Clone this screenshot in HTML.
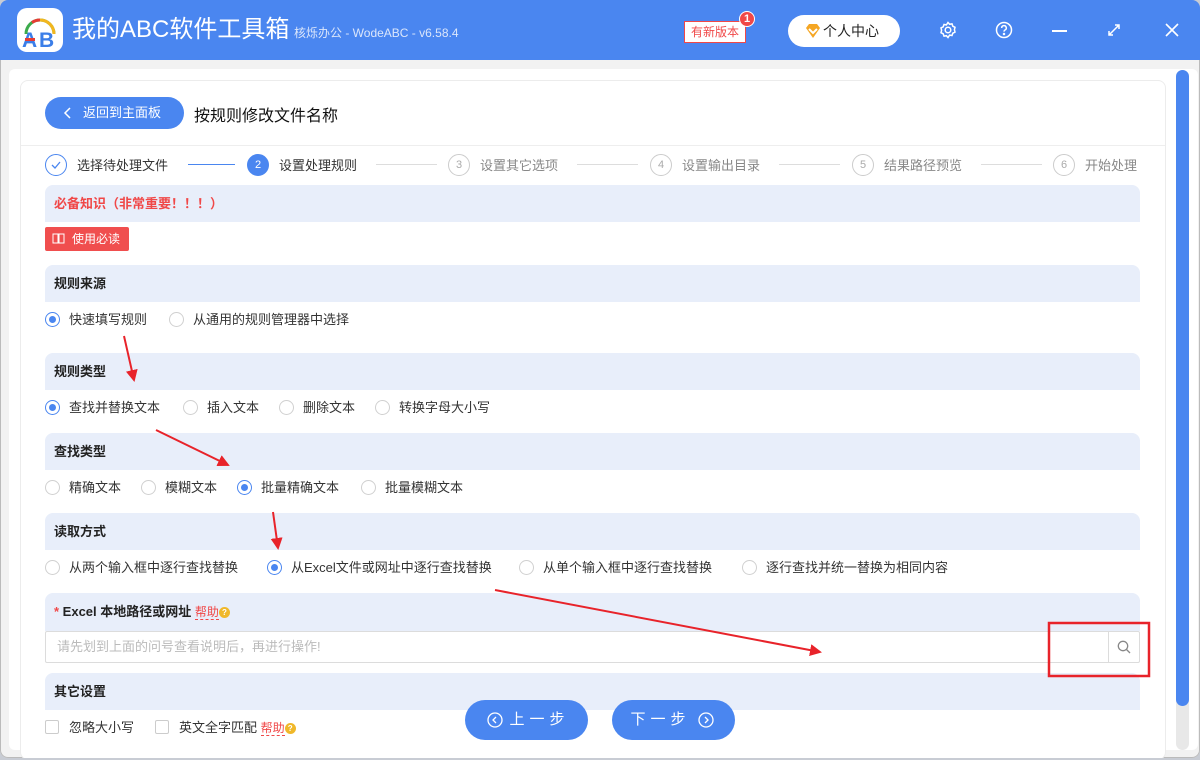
<!DOCTYPE html>
<html><head><meta charset="utf-8"><style>
*{box-sizing:border-box;margin:0;padding:0}
body{width:1200px;height:760px;overflow:hidden;background:#c8ccd4;font-family:"Liberation Sans","Noto Sans CJK SC",sans-serif;position:relative;font-size:13px;color:#333}
.a{position:absolute}
.win{left:0;top:0;width:1200px;height:758px;background:#f2f2f2;border-radius:8px;overflow:hidden;box-shadow:inset 0 0 0 1px #bbb}
.hdr{left:0;top:0;width:1200px;height:60px;background:#4a86f0}
.panel{left:9px;top:69px;width:1189px;height:681px;background:#fff;border-radius:6px}
.card{left:20px;top:80px;width:1146px;height:680px;border:1px solid #ececec;border-radius:8px;background:#fff}
.band{left:45px;width:1095px;height:37px;background:#e8eefa;border-radius:8px 8px 0 0;font-weight:bold;font-size:13px;line-height:37px;padding-left:9px;color:#222}
.r{position:absolute;width:15px;height:15px;border:1px solid #d0d0d0;border-radius:50%;background:#fff}
.r.on{border-color:#4a86f0}
.r.on::after{content:"";position:absolute;left:3px;top:3px;width:7px;height:7px;border-radius:50%;background:#4a86f0}
.t{position:absolute;font-size:13px;color:#333;white-space:nowrap}
.st{position:absolute;width:22px;height:22px;border:1px solid #ccc;border-radius:50%;color:#aaa;font-size:11px;text-align:center;line-height:20px}
.sl{position:absolute;height:1px;background:#ddd;top:164px}
.btn{position:absolute;height:40px;width:123px;border-radius:20px;background:#4a86f0;color:#fff;font-size:15px;line-height:40px;text-align:center;letter-spacing:5px}
.cb{position:absolute;width:14px;height:14px;border:1px solid #ccc;border-radius:2px;background:#fff}
.help{color:#f04848;border-bottom:1px dashed #f04848;font-size:12px}
.q{display:inline-block;width:11px;height:11px;border-radius:50%;background:#f0b82a;color:#fff;font-size:8px;text-align:center;line-height:11px;vertical-align:middle;font-weight:bold}
</style></head><body>
<div class="a win">
<div class="a hdr"></div>
<div class="a" style="left:17px;top:8px;width:46px;height:44px;background:#fff;border-radius:10px"></div>
<svg class="a" style="left:17px;top:8px" width="46" height="44" viewBox="0 0 46 44">
<path d="M9 26 A14 14 0 0 1 37 26" fill="none" stroke="#3cab4c" stroke-width="3"/>
<path d="M23 12 A14 14 0 0 1 37 26" fill="none" stroke="#f3b61e" stroke-width="3"/>
<path d="M15 14.5 A14 14 0 0 1 23 12" fill="none" stroke="#e63b33" stroke-width="3"/>
<text x="5" y="39" font-family="Liberation Sans" font-weight="bold" font-size="21" fill="#3b7ee8">A</text>
<text x="22" y="39" font-family="Liberation Sans" font-weight="bold" font-size="21" fill="#3b7ee8">B</text>
<rect x="8" y="30" width="10" height="3" fill="#e63b33"/>
</svg>
<div class="a" style="left:72px;top:14px;color:#fff;font-size:24px;line-height:32px">我的ABC软件工具箱</div>
<div class="a" style="left:294px;top:24px;color:#dbe6fb;font-size:12px">核烁办公 - WodeABC - v6.58.4</div>
<div class="a" style="left:684px;top:21px;width:62px;height:22px;border:1px solid #f04848;background:#fff;color:#f04848;font-size:12px;text-align:center;line-height:20px">有新版本</div>
<div class="a" style="left:739px;top:11px;width:16px;height:16px;border-radius:50%;background:#f04848;border:1px solid #fff;color:#fff;font-size:11px;text-align:center;line-height:14px;font-weight:bold">1</div>
<div class="a" style="left:788px;top:15px;width:112px;height:32px;border-radius:16px;background:#fff;font-size:14px;line-height:32px;padding-left:35px;color:#222">个人中心</div>
<svg class="a" style="left:804px;top:22px" width="18" height="18" viewBox="0 0 18 18"><path d="M2 6 L5 2 H13 L16 6 L9 16 Z" fill="#f5a623"/><path d="M5 7 L9 11 L13 7" fill="none" stroke="#fff" stroke-width="2"/></svg>
<svg class="a" style="left:938px;top:20px" width="20" height="20" viewBox="0 0 20 20" fill="none" stroke="#fff" stroke-width="1.5"><circle cx="10" cy="10" r="2.8"/><path d="M10 2.5l1.6 1.8 2.4-.4.8 2.3 2.2 1.1-.6 2.4 .6 2.4-2.2 1.1-.8 2.3-2.4-.4L10 17.5l-1.6-1.8-2.4.4-.8-2.3-2.2-1.1.6-2.4-.6-2.4 2.2-1.1.8-2.3 2.4.4z"/></svg>
<svg class="a" style="left:994px;top:20px" width="20" height="20" viewBox="0 0 20 20" fill="none" stroke="#fff" stroke-width="1.5"><circle cx="10" cy="10" r="7.5"/><path d="M7.7 8a2.3 2.3 0 1 1 3.3 2c-.7.4-1 .8-1 1.6"/><circle cx="10" cy="14" r=".5" fill="#fff"/></svg>
<div class="a" style="left:1052px;top:30px;width:15px;height:1.5px;background:#fff"></div>
<svg class="a" style="left:1106px;top:22px" width="16" height="16" viewBox="0 0 16 16" stroke="#fff" stroke-width="1.5" fill="none"><path d="M3 13 L13 3 M9 3 H13 V7 M3 9 V13 H7"/></svg>
<svg class="a" style="left:1164px;top:22px" width="16" height="16" viewBox="0 0 16 16" stroke="#fff" stroke-width="1.6"><path d="M2 2 L14 14 M14 2 L2 14"/></svg>

<div class="a panel"></div>
<div class="a" style="left:1176px;top:70px;width:13px;height:680px;background:#e8e8e8;border-radius:7px"></div>
<div class="a" style="left:1176px;top:70px;width:13px;height:636px;background:#4a86f0;border-radius:7px"></div>
<div class="a card"></div>
<div class="a" style="left:21px;top:145px;width:1144px;height:1px;background:#eee"></div>

<div class="btn" style="left:45px;top:97px;width:139px;height:32px;line-height:32px;font-size:13px;letter-spacing:0;text-align:left;padding-left:38px;border-radius:16px">返回到主面板</div>
<svg class="a" style="left:63px;top:106px" width="10" height="14" viewBox="0 0 10 14"><path d="M7 2 L2 7 L7 12" stroke="#fff" stroke-width="1.5" fill="none"/></svg>
<div class="a" style="left:194px;top:102px;font-size:16px;color:#111">按规则修改文件名称</div>

<div class="st" style="left:45px;top:154px;border-color:#4a86f0"></div>
<svg class="a" style="left:49px;top:158px" width="14" height="14" viewBox="0 0 14 14"><path d="M3 7 L6 10 L11 4" stroke="#4a86f0" stroke-width="1.3" fill="none"/></svg>
<div class="t" style="left:77px;top:155px">选择待处理文件</div>
<div class="sl" style="left:188px;width:47px;background:#4a86f0"></div>
<div class="st" style="left:247px;top:154px;background:#4a86f0;border-color:#4a86f0;color:#fff">2</div>
<div class="t" style="left:279px;top:155px">设置处理规则</div>
<div class="sl" style="left:376px;width:61px"></div>
<div class="st" style="left:448px;top:154px">3</div>
<div class="t" style="left:480px;top:155px;color:#888">设置其它选项</div>
<div class="sl" style="left:577px;width:61px"></div>
<div class="st" style="left:650px;top:154px">4</div>
<div class="t" style="left:682px;top:155px;color:#888">设置输出目录</div>
<div class="sl" style="left:779px;width:61px"></div>
<div class="st" style="left:852px;top:154px">5</div>
<div class="t" style="left:884px;top:155px;color:#888">结果路径预览</div>
<div class="sl" style="left:981px;width:61px"></div>
<div class="st" style="left:1053px;top:154px">6</div>
<div class="t" style="left:1085px;top:155px;color:#888">开始处理</div>

<div class="a band" style="top:185px;color:#f04848">必备知识（非常重要！！！）</div>
<div class="a" style="left:45px;top:227px;width:84px;height:24px;background:#f04e4e;border-radius:2px;color:#fff;font-size:12px;line-height:24px;padding-left:27px">使用必读</div>
<svg class="a" style="left:52px;top:233px" width="13" height="11" viewBox="0 0 13 11" fill="none" stroke="#fff"><path d="M1 1h5v9H1zM7 1h5v9H7z"/></svg>

<div class="a band" style="top:265px">规则来源</div>
<div class="r on" style="left:45px;top:312px"></div><div class="t" style="left:69px;top:309px">快速填写规则</div>
<div class="r" style="left:169px;top:312px"></div><div class="t" style="left:193px;top:309px">从通用的规则管理器中选择</div>

<div class="a band" style="top:353px">规则类型</div>
<div class="r on" style="left:45px;top:400px"></div><div class="t" style="left:69px;top:397px">查找并替换文本</div>
<div class="r" style="left:183px;top:400px"></div><div class="t" style="left:207px;top:397px">插入文本</div>
<div class="r" style="left:279px;top:400px"></div><div class="t" style="left:303px;top:397px">删除文本</div>
<div class="r" style="left:375px;top:400px"></div><div class="t" style="left:399px;top:397px">转换字母大小写</div>

<div class="a band" style="top:433px">查找类型</div>
<div class="r" style="left:45px;top:480px"></div><div class="t" style="left:69px;top:477px">精确文本</div>
<div class="r" style="left:141px;top:480px"></div><div class="t" style="left:165px;top:477px">模糊文本</div>
<div class="r on" style="left:237px;top:480px"></div><div class="t" style="left:261px;top:477px">批量精确文本</div>
<div class="r" style="left:361px;top:480px"></div><div class="t" style="left:385px;top:477px">批量模糊文本</div>

<div class="a band" style="top:513px">读取方式</div>
<div class="r" style="left:45px;top:560px"></div><div class="t" style="left:69px;top:557px">从两个输入框中逐行查找替换</div>
<div class="r on" style="left:267px;top:560px"></div><div class="t" style="left:291px;top:557px">从Excel文件或网址中逐行查找替换</div>
<div class="r" style="left:519px;top:560px"></div><div class="t" style="left:543px;top:557px">从单个输入框中逐行查找替换</div>
<div class="r" style="left:742px;top:560px"></div><div class="t" style="left:766px;top:557px">逐行查找并统一替换为相同内容</div>

<div class="a band" style="top:593px;height:38px;line-height:38px"><span style="color:#f04848">*</span> Excel 本地路径或网址 <span class="help" style="font-weight:normal">帮助</span><span class="q">?</span></div>
<div class="a" style="left:45px;top:631px;width:1095px;height:32px;border:1px solid #dcdcdc;border-radius:2px;background:#fff;color:#bbb;font-size:13px;line-height:30px;padding-left:11px">请先划到上面的问号查看说明后，再进行操作!</div>
<div class="a" style="left:1108px;top:632px;width:1px;height:30px;background:#dcdcdc"></div>
<svg class="a" style="left:1116px;top:639px" width="16" height="16" viewBox="0 0 16 16" fill="none" stroke="#888" stroke-width="1.3"><circle cx="7" cy="7" r="4.7"/><path d="M10.5 10.5 L14 14"/></svg>

<div class="a band" style="top:673px">其它设置</div>
<div class="cb" style="left:45px;top:720px"></div><div class="t" style="left:69px;top:717px">忽略大小写</div>
<div class="cb" style="left:155px;top:720px"></div><div class="t" style="left:179px;top:717px">英文全字匹配 <span class="help">帮助</span><span class="q">?</span></div>

<div class="btn" style="left:465px;top:700px;padding-left:26px">上一步</div>
<svg class="a" style="left:486px;top:711px" width="18" height="18" viewBox="0 0 18 18" fill="none" stroke="#fff" stroke-width="1.3"><circle cx="9" cy="9" r="7"/><path d="M10 6 L7 9 L10 12"/></svg>
<div class="btn" style="left:612px;top:700px;padding-right:26px">下一步</div>
<svg class="a" style="left:697px;top:711px" width="18" height="18" viewBox="0 0 18 18" fill="none" stroke="#fff" stroke-width="1.3"><circle cx="9" cy="9" r="7"/><path d="M8 6 L11 9 L8 12"/></svg>

<svg class="a" style="left:0;top:0" width="1200" height="760" viewBox="0 0 1200 760">
<defs><marker id="m" markerWidth="6" markerHeight="6" refX="5" refY="3" orient="auto"><path d="M0 0 L6 3 L0 6 Z" fill="#e8232a"/></marker></defs>
<g stroke="#e8232a" stroke-width="2" fill="none">
<path d="M124 336 L134 380" marker-end="url(#m)"/>
<path d="M156 430 L228 465" marker-end="url(#m)"/>
<path d="M273 512 L278 548" marker-end="url(#m)"/>
<path d="M495 590 L820 652" marker-end="url(#m)"/>
<rect x="1049" y="623" width="100" height="53" stroke-width="2.5"/>
</g></svg>
</div>
</body></html>
